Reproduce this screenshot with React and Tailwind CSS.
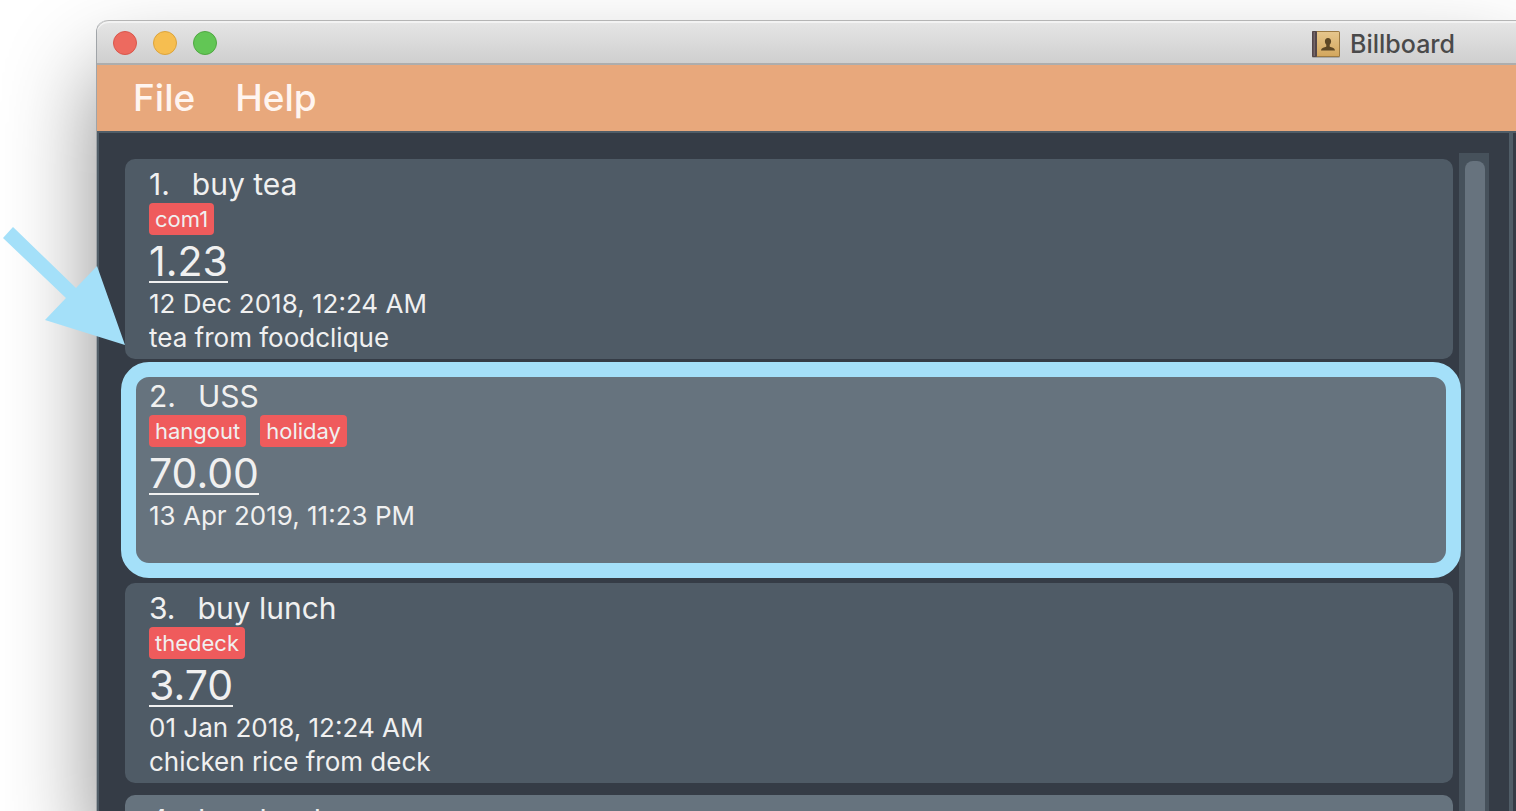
const expenses = [
  { id: 1, name: "buy tea", tags: ["com1"], amount: "1.23", date: "12 Dec 2018, 12:24 AM", remark: "tea from foodclique" },
  { id: 2, name: "USS", tags: ["hangout", "holiday"], amount: "70.00", date: "13 Apr 2019, 11:23 PM", remark: "", highlighted: true },
  { id: 3, name: "buy lunch", tags: ["thedeck"], amount: "3.70", date: "01 Jan 2018, 12:24 AM", remark: "chicken rice from deck" },
  { id: 4, name: "buy book", tags: [], amount: "", date: "", remark: "" },
];

function ContactsIcon() {
  return (
    <svg viewBox="0 0 28 27" className="h-[27px] w-7" aria-hidden="true">
      <defs>
        <linearGradient id="cover" x1="0" y1="0" x2="0" y2="1">
          <stop offset="0" stopColor="#e6c68c" />
          <stop offset="1" stopColor="#d3a75e" />
        </linearGradient>
      </defs>
      <rect x="0" y="1" width="28" height="26" rx="1.5" fill="#a9a9a9" />
      <rect x="0" y="0" width="28" height="26" rx="1.5" fill="#9c7a42" />
      <rect x="0" y="0" width="5" height="26" rx="1" fill="#54474a" />
      <rect x="1.5" y="1" width="1.5" height="24" fill="#756668" />
      <rect x="5" y="1" width="22" height="24" fill="url(#cover)" />
      <path d="M16 7c-2 0-3.100 1.300-3.100 3.300 0 1.500.6 2.700 1.400 3.500v1.700c0 .8-5.100.7-5.300 4h14c-.2-3.300-5.300-3.200-5.300-4v-1.700c.8-.8 1.400-2 1.400-3.500 0-2-1.100-3.300-3.100-3.300z" fill="#5d4724" />
    </svg>
  );
}

function TitleBar() {
  return (
    <header className="flex h-[45px] shrink-0 items-center justify-between rounded-tl-xl border-t border-[#b5b5b5] bg-linear-to-b from-[#e6e6e6] to-[#cecece] pr-[61px] pl-4 shadow-[inset_0_-2px_0_#adadad,inset_0_2px_0_#f3f3f3]">
      <div className="flex gap-4">
        <button aria-label="Close" className="size-6 rounded-full border border-[#d9574c] bg-[#ed6a5f]" />
        <button aria-label="Minimize" className="size-6 rounded-full border border-[#dca43c] bg-[#f6be50]" />
        <button aria-label="Zoom" className="size-6 rounded-full border border-[#50a842] bg-[#62c655]" />
      </div>
      <div className="flex items-center gap-[10px] pt-[2px]">
        <ContactsIcon />
        <h1 className="text-[25px] leading-8 font-[450] text-[#4a4a4a]">Billboard</h1>
      </div>
    </header>
  );
}

function ExpenseCard({ expense }) {
  return (
    <li
      className={
        "relative h-[200px] shrink-0 rounded-[10px] px-6 pt-[6px] font-[420] text-[#f0f0f0] " +
        (expense.id % 2 === 0 ? "bg-[#66737e]" : "bg-[#4f5b66]")
      }
    >
      <h2 className="flex gap-[22px] text-[30px] leading-[38px] font-[400]">
        <span>{expense.id}.</span>
        <span>{expense.name}</span>
      </h2>
      <div className="flex gap-[14px]">
        {expense.tags.map((tag) => (
          <span key={tag} className="h-8 rounded-[4px] bg-[#ef5b5c] px-[6px] text-[22px] leading-8">
            {tag}
          </span>
        ))}
      </div>
      <p className="mt-1 flex h-[44px]">
        <span className="border-b-2 border-[#f0f0f0] text-[41px] leading-[44px]">{expense.amount}</span>
      </p>
      <p className="mt-1 text-[26px] leading-[34px]">{expense.date}</p>
      <p className="text-[26px] leading-[34px]">{expense.remark}</p>
      {expense.highlighted && (
        <div className="absolute -top-[9px] -right-2 -bottom-[7px] -left-1 z-10 rounded-[28px] border-[15px] border-[#a4e0f9]" />
      )}
    </li>
  );
}

export default function App() {
  return (
    <div className="relative h-screen overflow-hidden bg-white pt-5 pl-24 font-['Inter','Liberation_Sans',sans-serif]">
      <div className="flex h-full flex-col rounded-tl-xl border-l border-[#a0a4a8] shadow-[0_50px_90px_rgba(0,0,0,0.45)]">
        <TitleBar />
        <nav className="flex h-[66px] shrink-0 items-center gap-10 bg-[#e8a87c] pl-9 text-[37px] font-[450] text-[#fff5f0]">
          <button>File</button>
          <button>Help</button>
        </nav>
        <main className="flex min-h-0 grow border-t-2 border-l-2 border-[#505d67] bg-[#353c46]">
          <section className="flex min-w-0 grow pt-5 pr-5 pl-[26px]">
            <ul className="flex min-w-0 grow flex-col gap-3 pt-[6px] pr-[6px]">
              {expenses.map((expense) => (
                <ExpenseCard key={expense.id} expense={expense} />
              ))}
            </ul>
            <div className="w-[30px] bg-[#46515b] pt-2 pr-1 pl-[6px]">
              <div className="h-full rounded-t-lg bg-[#67737e]" />
            </div>
          </section>
          <aside className="w-[7px] border-l-4 border-[#505d67]" />
        </main>
      </div>
      <svg viewBox="0 0 126 120" className="absolute top-[226px] left-0 h-[120px] w-[126px]" aria-hidden="true">
        <polygon points="13,1 76,62 97,40 125,119 45,94 66,72 3,12" fill="#a4e0f9" />
      </svg>
    </div>
  );
}
